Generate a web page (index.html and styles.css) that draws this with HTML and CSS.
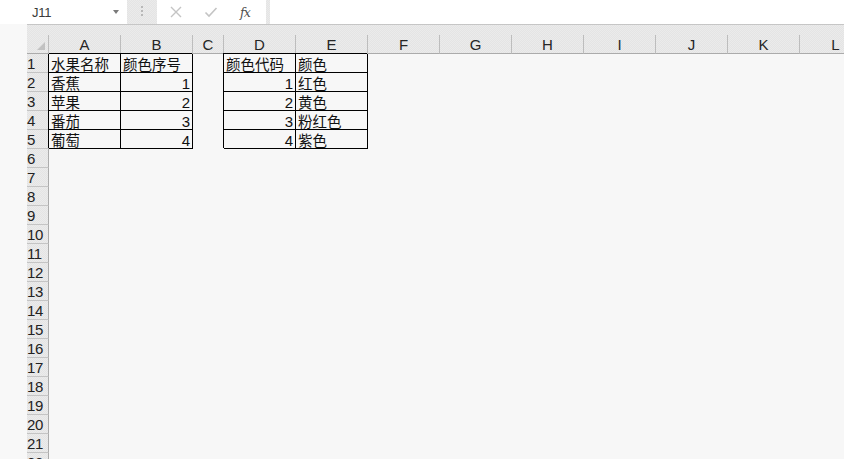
FILE: index.html
```html
<!DOCTYPE html>
<html lang="zh-CN">
<head>
<meta charset="utf-8">
<title>Sheet</title>
<link rel="stylesheet" href="styles.css">
</head>
<body>
<div class="app">
  <div class="toolbar">
    <div class="namebox"><span class="ref">J11</span><span class="caret"></span></div>
    <div class="grip">
      <svg width="4" height="24" viewBox="0 0 4 24"><circle cx="2" cy="7" r="1" fill="#a8a8a8"/><circle cx="2" cy="11" r="1" fill="#a8a8a8"/><circle cx="2" cy="15" r="1" fill="#a8a8a8"/></svg>
    </div>
    <div class="fxbox">
      <svg class="ico" width="14" height="24" viewBox="0 0 14 24"><path d="M2 7 L12 17 M12 7 L2 17" stroke="#c4c4c4" stroke-width="1.4" fill="none"/></svg>
      <svg class="ico" width="14" height="24" viewBox="0 0 14 24"><path d="M1.5 12.5 L5 16 L12.5 8" stroke="#c4c4c4" stroke-width="1.6" fill="none"/></svg>
      <span class="fx">fx</span>
    </div>
    <div class="gap"></div>
    <div class="formula"></div>
  </div>
  <div class="main">
    <div class="gutter"></div>
    <div class="sheet">
      <div class="colhead">
        <div class="corner"><span class="tri"></span></div>
        <div class="ch">A</div><div class="ch">B</div><div class="ch narrow">C</div><div class="ch">D</div><div class="ch">E</div><div class="ch">F</div><div class="ch">G</div><div class="ch">H</div><div class="ch">I</div><div class="ch">J</div><div class="ch">K</div><div class="ch">L</div>
      </div>
      <div class="rows">
        <div class="rh">1</div><div class="c b">水果名称</div><div class="c b">颜色序号</div><div class="c"></div><div class="c b">颜色代码</div><div class="c b">颜色</div><div class="c"></div><div class="c"></div><div class="c"></div><div class="c"></div><div class="c"></div><div class="c"></div><div class="c"></div>
        <div class="rh">2</div><div class="c b">香蕉</div><div class="c b n">1</div><div class="c"></div><div class="c b n">1</div><div class="c b">红色</div><div class="c"></div><div class="c"></div><div class="c"></div><div class="c"></div><div class="c"></div><div class="c"></div><div class="c"></div>
        <div class="rh">3</div><div class="c b">苹果</div><div class="c b n">2</div><div class="c"></div><div class="c b n">2</div><div class="c b">黄色</div><div class="c"></div><div class="c"></div><div class="c"></div><div class="c"></div><div class="c"></div><div class="c"></div><div class="c"></div>
        <div class="rh">4</div><div class="c b">番茄</div><div class="c b n">3</div><div class="c"></div><div class="c b n">3</div><div class="c b">粉红色</div><div class="c"></div><div class="c"></div><div class="c"></div><div class="c"></div><div class="c"></div><div class="c"></div><div class="c"></div>
        <div class="rh">5</div><div class="c b">葡萄</div><div class="c b n">4</div><div class="c"></div><div class="c b n">4</div><div class="c b">紫色</div><div class="c"></div><div class="c"></div><div class="c"></div><div class="c"></div><div class="c"></div><div class="c"></div><div class="c"></div>
        <div class="rh">6</div><div class="fill"></div>
        <div class="rh">7</div><div class="fill"></div>
        <div class="rh">8</div><div class="fill"></div>
        <div class="rh">9</div><div class="fill"></div>
        <div class="rh">10</div><div class="fill"></div>
        <div class="rh">11</div><div class="fill"></div>
        <div class="rh">12</div><div class="fill"></div>
        <div class="rh">13</div><div class="fill"></div>
        <div class="rh">14</div><div class="fill"></div>
        <div class="rh">15</div><div class="fill"></div>
        <div class="rh">16</div><div class="fill"></div>
        <div class="rh">17</div><div class="fill"></div>
        <div class="rh">18</div><div class="fill"></div>
        <div class="rh">19</div><div class="fill"></div>
        <div class="rh">20</div><div class="fill"></div>
        <div class="rh">21</div><div class="fill"></div>
        <div class="rh">22</div><div class="fill"></div>
      </div>
    </div>
  </div>
</div>
</body>
</html>
```

FILE: styles.css
```css
* { box-sizing: border-box; }
html, body {
  margin: 0;
  padding: 0;
  width: 844px;
  height: 459px;
  overflow: hidden;
  background: #f7f7f7;
  font-family: "Liberation Sans", "Noto Sans CJK SC", sans-serif;
}
.app {
  display: flex;
  flex-direction: column;
  height: 459px;
}
.toolbar {
  display: flex;
  height: 24px;
  flex: none;
  background: repeating-conic-gradient(#e4e4e4 0 25%, #ebebeb 0 50%) 0 0 / 2px 2px;
}
.namebox {
  width: 127px;
  background: #ffffff;
  display: flex;
  align-items: center;
  padding-left: 32px;
  position: relative;
}
.ref {
  font-size: 13px;
  color: #3a3a3a;
  letter-spacing: -0.3px;
}
.caret {
  position: absolute;
  left: 113px;
  top: 10px;
  width: 0;
  height: 0;
  border-left: 3.5px solid transparent;
  border-right: 3.5px solid transparent;
  border-top: 4px solid #7a7a7a;
}
.grip {
  width: 30px;
  display: flex;
  justify-content: center;
}
.fxbox {
  width: 109px;
  background: #ffffff;
  display: flex;
  align-items: center;
  padding-left: 12px;
  gap: 21px;
}
.fx {
  font-family: "DejaVu Serif", "Liberation Serif", serif;
  font-style: italic;
  font-size: 12.5px;
  color: #505050;
  letter-spacing: -1px;
  margin-left: 1px;
}
.gap { width: 4px; }
.formula { flex: 1; background: #ffffff; }

.main {
  flex: 1;
  display: flex;
  min-height: 0;
}
.gutter {
  width: 27px;
  flex: none;
  background: #f8f8f8;
}
.sheet {
  flex: 1;
  border-top: 1px solid #c6c6c6;
  min-width: 0;
}
.colhead {
  display: grid;
  grid-template-columns: 22px 72px 72px 31px repeat(9, 72px);
  grid-template-rows: 19px;
  padding-top: 10px;
  background: repeating-conic-gradient(#e4e4e4 0 25%, #ebebeb 0 50%) 0 0 / 2px 2px;
}
.corner, .ch {
  border-right: 1px solid #bdbdbd;
  border-bottom: 1px solid #ababab;
}
.corner { position: relative; }
.tri {
  position: absolute;
  right: 3px;
  bottom: 3px;
  width: 0;
  height: 0;
  border-left: 8px solid transparent;
  border-bottom: 8px solid #c2c2c2;
}
.ch {
  text-align: center;
  font-size: 15px;
  line-height: 18px;
  padding-top: 1px;
  color: #262626;
}
.rows {
  display: grid;
  grid-template-columns: 22px 72px 72px 31px repeat(9, 72px);
  grid-auto-rows: 19px;
}
.rh {
  background: repeating-conic-gradient(#e4e4e4 0 25%, #ebebeb 0 50%) 0 0 / 2px 2px;
  border-right: 1px solid #ababab;
  border-bottom: 1px solid #c4c4c4;
  font-size: 15px;
  line-height: 18px;
  padding-top: 1px;
  padding-left: 0;
  color: #222222;
  letter-spacing: -0.4px;
  white-space: nowrap;
}
.fill { grid-column: 2 / -1; }
.c {
  font-size: 14.5px;
  line-height: 18px;
  padding-top: 2px;
  padding-left: 2px;
  color: #111111;
  white-space: nowrap;
  overflow: visible;
}
.b {
  box-shadow: inset -1px -1px 0 #000, -1px -1px 0 #000;
}
.n {
  text-align: right;
  padding-right: 3px;
  font-size: 15px;
}
```
